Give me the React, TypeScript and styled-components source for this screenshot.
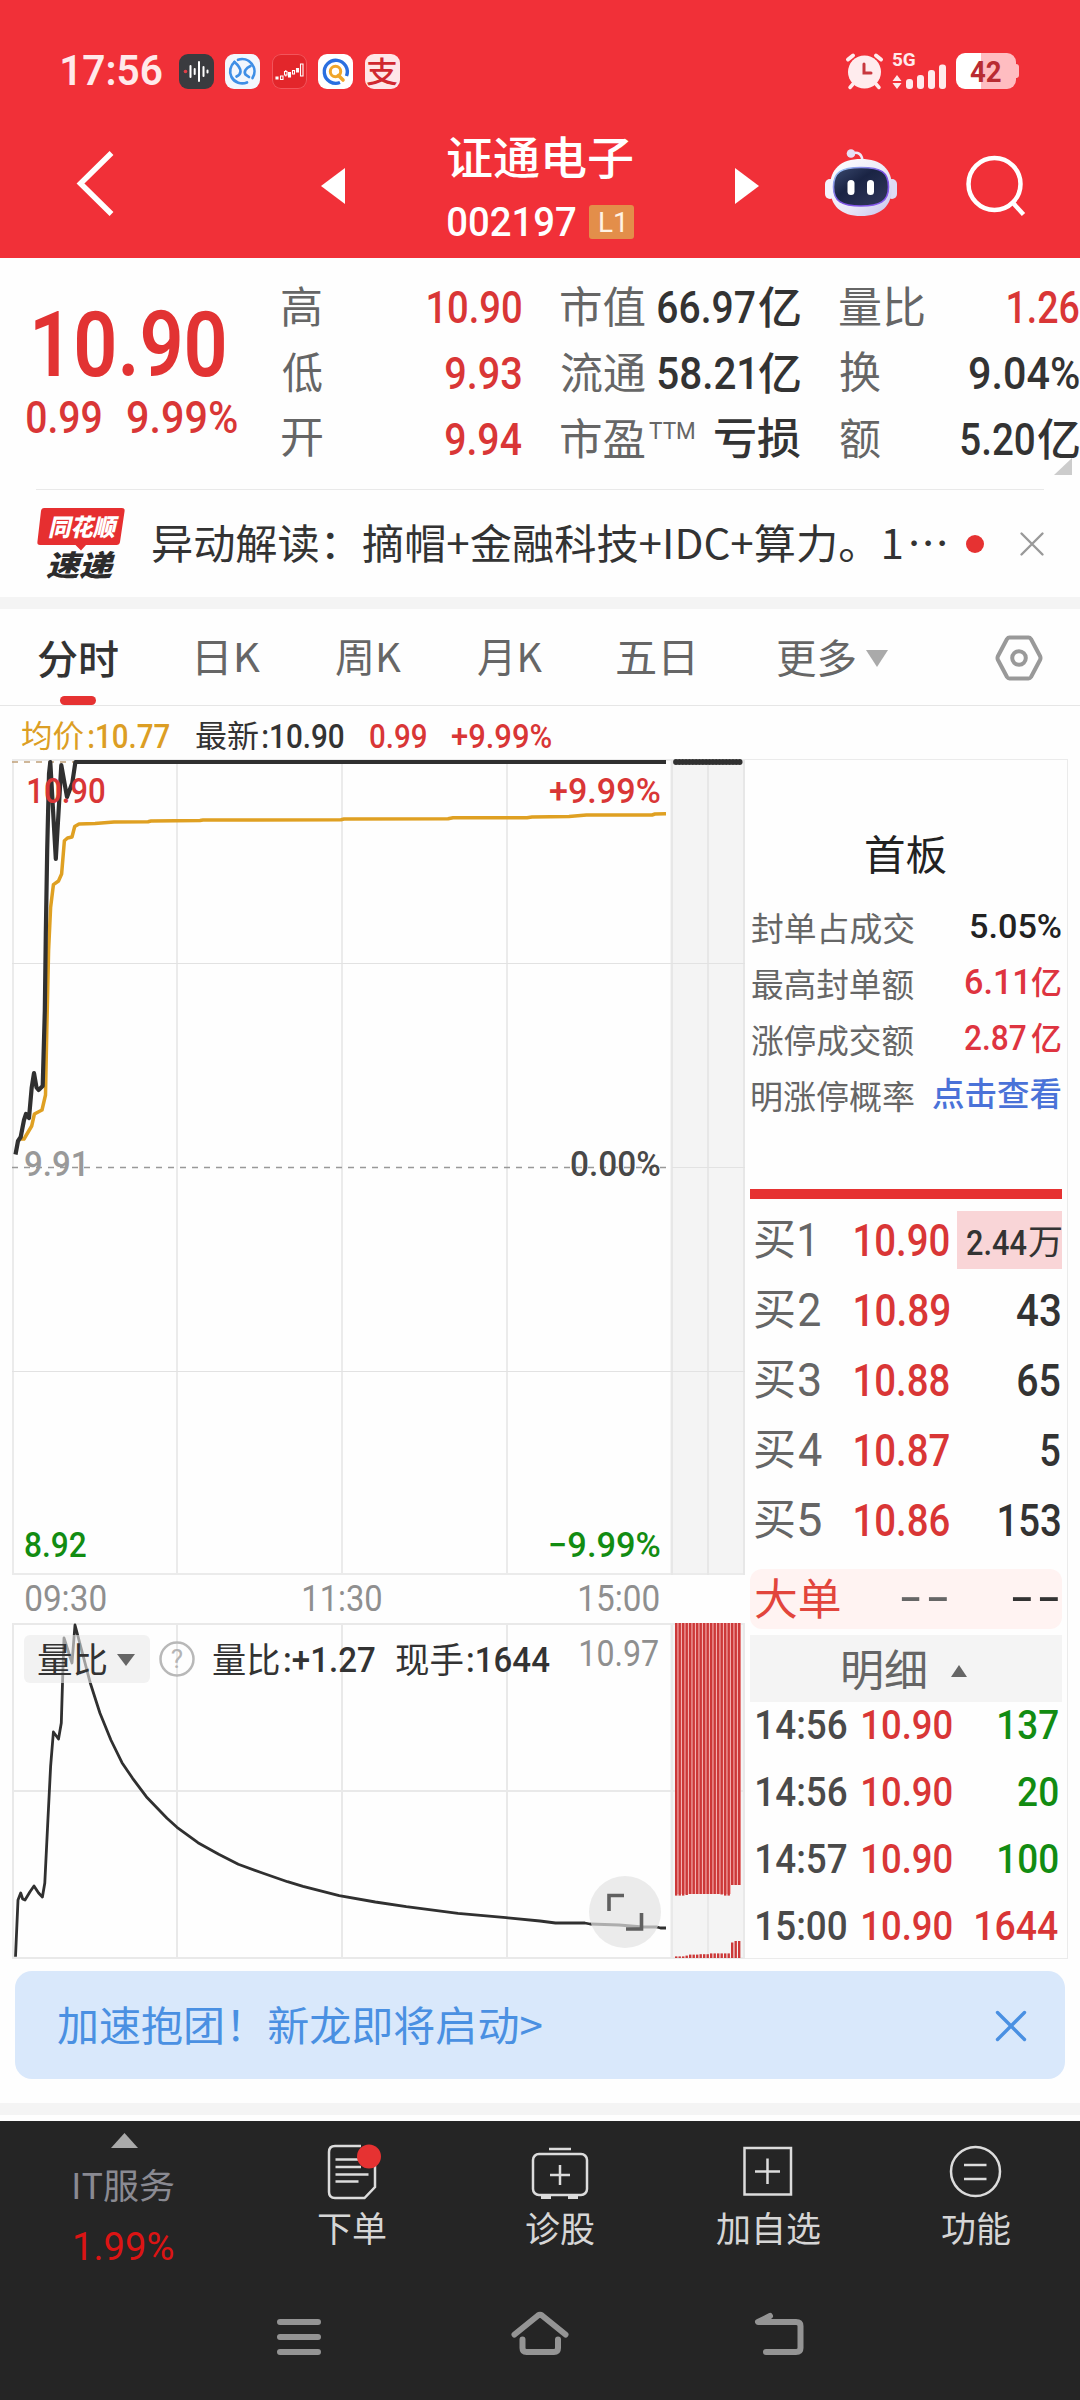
import React, { useLayoutEffect, useRef, useState } from "react";
import styled, { createGlobalStyle } from "styled-components";

const NUM = `Roboto, "Noto Sans CJK SC", sans-serif`;
const CJK = `"Noto Sans CJK SC", Roboto, sans-serif`;

const Global = createGlobalStyle`
  * { box-sizing: border-box; }
  body { margin: 0; background: #fefefe; font-family: ${NUM}; line-height: 1.2; }
  svg { display: block; flex: none; overflow: visible; }
`;

/* ---------- text fitted to an exact ink width, centred on its ink ---------- */

const FitBox = styled.span<{ $w: number; $ml?: number; $size?: number; $c?: string; $weight?: number; $cjk?: boolean }>`
  display: block;
  flex: none;
  width: ${(p) => p.$w}px;
  margin-left: ${(p) => p.$ml ?? 0}px;
  white-space: nowrap;
  ${(p) => (p.$size ? `font-size: ${p.$size}px;` : "")}
  ${(p) => (p.$c ? `color: ${p.$c};` : "")}
  font-weight: ${(p) => p.$weight ?? (p.$cjk ? 400 : 500)};
  font-family: ${(p) => (p.$cjk ? CJK : NUM)};
`;

const FitInk = styled.span`
  display: inline-block;
  transform-origin: 0 50%;
`;

interface TextProps {
  w: number;
  ml?: number;
  size?: number;
  c?: string;
  weight?: number;
  cjk?: boolean;
  children: string;
}

function Text({ w, ml, size, c, weight, cjk, children }: TextProps) {
  const ref = useRef<HTMLSpanElement>(null);
  const [transform, setTransform] = useState("none");
  useLayoutEffect(() => {
    const el = ref.current;
    const ctx = document.createElement("canvas").getContext("2d");
    if (!el || !ctx) return;
    const cs = getComputedStyle(el);
    ctx.font = `${cs.fontWeight} ${cs.fontSize} ${cs.fontFamily}`;
    const m = ctx.measureText(children);
    const s = w / (m.actualBoundingBoxLeft + m.actualBoundingBoxRight);
    const base = (m.fontBoundingBoxAscent - m.fontBoundingBoxDescent) / 2;
    const dy = (m.actualBoundingBoxAscent - m.actualBoundingBoxDescent) / 2 - base;
    setTransform(`translate(${m.actualBoundingBoxLeft * s}px, ${dy}px) scaleX(${s})`);
  }, [children, w, size, weight]);
  return (
    <FitBox $w={w} $ml={ml} $size={size} $c={c} $weight={weight} $cjk={cjk}>
      <FitInk ref={ref} style={{ transform }}>{children}</FitInk>
    </FitBox>
  );
}

const Cn = (p: TextProps) => <Text cjk {...p} />;

/* ---------- page ---------- */

const Page = styled.div`
  width: 1080px;
  height: 2400px;
  display: flex;
  flex-direction: column;
  overflow: hidden;
  background: #fefefe;
  color: #333;
`;

const Header = styled.header`
  height: 258px;
  padding-top: 35px;
  background: #f13038;
  color: #fff;
`;
const StatusBar = styled.div`
  display: flex;
  align-items: center;
  height: 72px;
  padding-left: 62px;
`;
const AppIcons = styled.div`
  display: flex;
  gap: 11.6px;
  margin-left: 17px;
`;
const AppIcon = styled.div<{ $bg: string; $line?: string }>`
  width: 35px;
  height: 35px;
  border-radius: 9px;
  display: flex;
  align-items: center;
  justify-content: center;
  background: ${(p) => p.$bg};
  box-shadow: inset 0 0 0 1px ${(p) => p.$line ?? "transparent"};
`;
const StatusRight = styled.div`
  display: flex;
  align-items: center;
  margin-left: 446px;
`;
const Signal = styled.div`
  display: flex;
  flex-direction: column;
  width: 55px;
  height: 36px;
  margin-left: 9.5px;
`;
const NetworkType = styled.div`
  display: flex;
  align-items: center;
  height: 14px;
`;
const Battery = styled.div`
  display: flex;
  align-items: center;
  width: 60px;
  height: 36px;
  margin-left: 9px;
  border-radius: 9px;
  background: linear-gradient(90deg, #fff 41%, #ffbdc1 41%);
`;
const BatteryNub = styled.div`
  width: 3px;
  height: 14px;
  border-radius: 0 3px 3px 0;
  background: #ffbdc1;
`;
const Nav = styled.div`
  display: flex;
  align-items: center;
  height: 151px;
  padding-left: 77px;
`;
const TitleBlock = styled.div`
  width: 186px;
  margin-left: 103px;
  padding-top: 7px;
`;
const TitleRow = styled.div<{ $h: number; $mt?: number }>`
  display: flex;
  align-items: center;
  height: ${(p) => p.$h}px;
  margin-top: ${(p) => p.$mt ?? 0}px;
`;
const LevelTag = styled.div`
  display: flex;
  align-items: center;
  justify-content: center;
  width: 45px;
  height: 34px;
  margin-left: 13px;
  border-radius: 3px;
  background: #e38e4a;
`;

/* ---------- quote ---------- */

const Quote = styled.section`
  position: relative;
  display: flex;
  height: 231px;
  padding-top: 16px;
`;
const PriceBlock = styled.div`
  flex: none;
  width: 282px;
  padding-top: 26px;
  color: #e23333;
`;
const Line = styled.div<{ $h: number; $pl?: number }>`
  display: flex;
  align-items: center;
  height: ${(p) => p.$h}px;
  padding-left: ${(p) => p.$pl ?? 0}px;
`;
const Group = styled.div`
  width: 239px;
  margin-right: 40px;
  flex: none;
`;
const Stat = styled.div`
  display: flex;
  align-items: center;
  justify-content: space-between;
  height: 66px;
`;
const Pair = styled.div<{ $gap: number }>`
  display: flex;
  align-items: center;
  gap: ${(p) => p.$gap}px;
`;
const Raised = styled.div`
  padding-bottom: 17px;
`;
const Corner = styled.div`
  position: absolute;
  right: 8px;
  top: 200px;
  width: 18px;
  height: 17px;
  background: #ccc;
  clip-path: polygon(100% 0, 100% 100%, 0 100%);
`;

const News = styled.section`
  display: flex;
  align-items: center;
  height: 108px;
  margin: 0 36px;
  border-top: 1px solid #e9e9e9;
`;
const Dot = styled.div`
  width: 18px;
  height: 18px;
  margin: 0 36px 0 21px;
  border-radius: 50%;
  background: #e63232;
`;
const Band = styled.div`
  height: 12px;
  flex: none;
  background: #f4f4f4;
`;

/* ---------- tabs ---------- */

const Tabs = styled.nav`
  display: flex;
  align-items: center;
  height: 97px;
  padding: 2px 0 0 38px;
  border-bottom: 1px solid #e6e6e6;
`;
const ActiveTab = styled.div`
  display: flex;
  flex-direction: column;
  justify-content: space-between;
  align-items: center;
  align-self: stretch;
  width: 80px;
  padding-top: 24px;
`;
const Underline = styled.div`
  width: 36px;
  height: 9px;
  border-radius: 5px;
  background: #e63232;
`;

/* ---------- charts ---------- */

const Main = styled.main`
  display: flex;
  height: 1256px;
`;
const ChartColumn = styled.div`
  width: 745px;
  flex: none;
`;
const Legend = styled.div`
  display: flex;
  align-items: center;
  height: 50px;
  padding: 10px 0 0 22px;
`;
const ChartArea = styled.div<{ $h: number }>`
  position: relative;
  height: ${(p) => p.$h}px;
`;
const ChartLabel = styled.div<{ $x: number; $y: number }>`
  position: absolute;
  left: ${(p) => p.$x}px;
  top: ${(p) => p.$y}px;
  height: 0;
  display: flex;
  align-items: center;
`;
const TimeAxis = styled.div`
  display: flex;
  align-items: center;
  height: 46px;
  padding-left: 26px;
`;
const IndicatorBar = styled.div`
  position: absolute;
  left: 24px;
  top: 13px;
  display: flex;
  align-items: center;
  height: 48px;
`;
const IndicatorButton = styled.div`
  display: flex;
  align-items: center;
  width: 126px;
  height: 48px;
  padding: 2px 0 0 14px;
  border-radius: 6px;
  background: rgba(233, 233, 233, 0.6);
`;
const IndicatorValues = styled.div`
  display: flex;
  align-items: center;
  padding-top: 2px;
`;
const Expand = styled.div`
  position: absolute;
  left: 589px;
  top: 254px;
  width: 72px;
  height: 72px;
  border-radius: 50%;
  background: rgba(226, 226, 226, 0.7);
`;

/* ---------- order panel ---------- */

const Panel = styled.aside`
  width: 323px;
  height: 1200px;
  margin-top: 53px;
  padding: 0 5px;
  border: 1px solid #ebebeb;
  border-left: none;
`;
const PanelTitle = styled.div`
  display: flex;
  align-items: center;
  justify-content: center;
  height: 61px;
  margin: 64px 0 16px;
`;
const LimitRow = styled.div`
  display: flex;
  align-items: center;
  justify-content: space-between;
  height: 56px;
  padding: 0 1px 0 2px;
`;
const LimitValue = styled.div`
  display: flex;
  align-items: center;
  gap: 5px;
  padding-bottom: 6px;
`;
const RedBar = styled.div`
  height: 10px;
  margin: 64px 0 6px;
  background: #e63232;
`;
const BuyRow = styled.div`
  display: grid;
  grid-template-columns: 100px 94px 1fr;
  align-items: center;
  height: 70px;
  padding-left: 5px;
`;
const Qty = styled.div<{ $hot?: boolean }>`
  display: flex;
  align-items: center;
  justify-content: flex-end;
  gap: 2px;
  height: 58px;
  margin-left: 8px;
  padding: ${(p) => (p.$hot ? "6px 1px 0 0" : "0 2px 0 0")};
  background: ${(p) => (p.$hot ? "#f9d5d7" : "none")};
`;
const BigOrder = styled.div`
  display: flex;
  align-items: center;
  height: 60px;
  margin-top: 14px;
  padding-left: 5px;
  border-radius: 12px;
  background: #fff3f2;
`;
const DetailHead = styled.div`
  display: flex;
  align-items: center;
  height: 67px;
  margin-top: 6px;
  padding: 4px 0 0 93px;
  background: #f4f4f4;
`;
const Ticks = styled.div`
  margin-top: -11px;
`;
const Tick = styled.div`
  display: grid;
  grid-template-columns: 106px 90px 1fr;
  align-items: center;
  justify-items: start;
  height: 67px;
  padding: 0 4px 0 7px;
  & > :last-child { justify-self: end; }
`;

/* ---------- bottom ---------- */

const Banner = styled.section`
  display: flex;
  align-items: center;
  justify-content: space-between;
  height: 108px;
  margin: 9px 15px 24px;
  padding: 2px 39px 0 43px;
  border-radius: 17px;
  background: #d9e8fb;
`;
const BottomBar = styled.footer`
  display: flex;
  height: 157px;
  margin-top: 6px;
  background: #252525;
`;
const Sector = styled.div`
  display: flex;
  flex-direction: column;
  align-items: center;
  width: 248px;
  padding-top: 12px;
`;
const SectorLine = styled.div<{ $h: number }>`
  display: flex;
  align-items: center;
  height: ${(p) => p.$h}px;
`;
const NavItem = styled.div`
  display: flex;
  flex-direction: column;
  align-items: center;
  width: 208px;
  padding-top: 20px;
`;
const NavLabel = styled.div`
  display: flex;
  align-items: center;
  height: 55px;
`;
const SystemBar = styled.div`
  display: flex;
  justify-content: center;
  flex: 1;
  gap: 182px;
  padding-top: 26px;
  background: #252525;
`;

/* ---------- data ---------- */

const GRAY = "#666";
const RED = "#d93636";
const GREEN = "#128c12";

const buys = [
  { n: "1", nw: 12, price: "10.90", qty: "2.44", qw: 60, unit: "万" },
  { n: "2", nw: 21, price: "10.89", qty: "43", qw: 43 },
  { n: "3", nw: 21, price: "10.88", qty: "65", qw: 42 },
  { n: "4", nw: 23, price: "10.87", qty: "5", qw: 19 },
  { n: "5", nw: 22, price: "10.86", qty: "153", qw: 61 },
];
const ticks = [
  { t: "14:56", q: "137", w: 59, c: GREEN },
  { t: "14:56", q: "20", w: 40, c: GREEN },
  { t: "14:57", q: "100", w: 59, c: GREEN },
  { t: "15:00", q: "1644", w: 82, c: RED },
];

const pricePath =
  "15.5,1154.5 18,1141 20.7,1137 24,1120 26,1114 29,1118 31.7,1087.5 34,1073 36.5,1087.5 38.6,1090 42.7,1086 44.8,1011 45.8,934 47.2,850 49,773.7 50.3,762 55.8,859 61.3,765 67,797 72.3,783 75.4,762 666,762";
const avgPath =
  "20.7,1139 24,1139 31.7,1126 34.4,1114 42,1110 45.5,1095 46.8,1030 48.6,950 50.6,907.6 53.4,884.7 58.5,881 61.6,874 64.4,840.7 67.5,838 72,837 74.7,826.5 79,824 95,823.4 114,822 148,821.7 151,821 200,820.5 203,820 341,819.8 344,819 448,818.8 453,817.8 527,817.7 532,817 569,816.5 586.5,815 652,815 655,814 666,813.8";
const ratioPath =
  "15.5,1956.7 18,1900 20.7,1893 22.7,1899 25,1900 30,1891.7 34,1886 38.6,1893 42.4,1897 44.8,1883 47.9,1820 50.6,1766.7 53.4,1732 58.5,1739 61.3,1723 62.7,1676.7 64,1638 72,1663 75,1625 90.2,1682.7 99.9,1713 110.9,1740 122,1762.7 132.6,1778.3 146.3,1796.7 167,1818.3 177,1827.3 198,1842.7 218.7,1854.3 238.3,1864.3 261.7,1872.7 287.5,1881.7 303,1886.3 339.2,1895.7 375.3,1902 406.3,1906.7 458,1913.3 506,1917.7 540,1921 555.5,1923 584.8,1923 590,1924 619,1925 643,1927 657,1927 660.5,1928 666,1928";
const auctionTop = [272.6, 272.6, 272.6, 272, 271, 271, 271, 271, 271, 271, 271, 271, 271, 271.5, 272.6, 272.6, 262, 262, 262];
const auctionBottom = [1.6, 1.6, 1.6, 2.4, 3.4, 3.4, 3.4, 3.8, 3.8, 3.8, 4.6, 4.6, 4.6, 4.6, 4.6, 4.6, 15.5, 17, 17];

/* ---------- drawings ---------- */

const Up = ({ w, h, c }: { w: number; h: number; c: string }) => (
  <svg width={w} height={h} viewBox="0 0 10 10" preserveAspectRatio="none"><path d="M0 10H10L5 0Z" fill={c} /></svg>
);
const Cross = ({ s, c, sw }: { s: number; c: string; sw: number }) => (
  <svg width={s} height={s} viewBox={`0 0 ${s} ${s}`} stroke={c} strokeWidth={sw} strokeLinecap="round">
    <path d={`M1.5 1.5L${s - 1.5} ${s - 1.5}M${s - 1.5} 1.5L1.5 ${s - 1.5}`} />
  </svg>
);

const Robot = () => (
  <svg width="72" height="68" viewBox="0 0 72 68" style={{ marginLeft: 66 }}>
    <defs>
      <linearGradient id="shell" x1="0" y1="0" x2="1" y2="1">
        <stop offset="0" stopColor="#fff" /><stop offset=".6" stopColor="#e9e7f7" /><stop offset="1" stopColor="#c5c2ec" />
      </linearGradient>
      <linearGradient id="rim" x1="0" y1="0" x2="1" y2="1">
        <stop offset="0" stopColor="#9fd8f5" /><stop offset=".5" stopColor="#7a4fe0" /><stop offset="1" stopColor="#8a5cf0" />
      </linearGradient>
      <linearGradient id="face" x1="0" y1="0" x2="1" y2="1">
        <stop offset="0" stopColor="#3b4a70" /><stop offset=".4" stopColor="#1a2444" /><stop offset="1" stopColor="#33385c" />
      </linearGradient>
    </defs>
    <path d="M27 4.500C33 2.500 37 5 37.500 12" fill="none" stroke="#f0e9fa" strokeWidth="2.600" />
    <circle cx="26" cy="4.500" r="4.300" fill="#e6e0f6" />
    <rect x="0" y="30" width="10" height="20" rx="5" fill="#f4f2fc" />
    <rect x="62" y="30" width="10" height="20" rx="5" fill="#dedaf5" />
    <path d="M36 10C56 10 67 20 67 38C67 57 56 67 36 67C16 67 5 57 5 38C5 20 16 10 36 10Z" fill="url(#shell)" />
    <path d="M36 18.500C56 18.500 63.500 23 63.500 38C63.500 52.500 55 57 36 57C17 57 8.500 52.500 8.500 38C8.500 23 16 18.500 36 18.500Z" fill="url(#face)" stroke="url(#rim)" strokeWidth="1.600" />
    <rect x="22.500" y="31" width="7" height="15" rx="3.500" fill="#fff" />
    <rect x="42" y="31" width="7" height="15" rx="3.500" fill="#fff" />
  </svg>
);

const NewsLogo = () => (
  <svg width="88" height="72" viewBox="0 0 88 72" style={{ marginLeft: 1 }}>
    <path d="M7 0H85Q88 0 87.600 3L83 34Q82.500 37 79.500 37H49L44 42.500L38.500 37H3Q0 37 .400 34L4 3Q4.500 0 7 0Z" fill="#e62f30" />
    <text x="11" y="27.500" fontSize="24" fontWeight="900" fontStyle="italic" fontFamily={CJK} fill="#fff" textLength="67" lengthAdjust="spacingAndGlyphs">同花顺</text>
    <text x="9" y="67.500" fontSize="29" fontWeight="900" fontStyle="italic" fontFamily={CJK} fill="#2c2c2c" textLength="66" lengthAdjust="spacingAndGlyphs">速递</text>
  </svg>
);

const PriceChart = () => (
  <svg width="746" height="820" viewBox="0 756 746 820" fill="none">
    <rect x="670" y="760" width="75" height="815" fill="#f4f4f4" />
    <g stroke="#ebebeb" strokeWidth="2">
      <path d="M13 760V1575M177 760V1575M342 760V1575M507 760V1575M12 760H745M12 1574H745" />
      <path d="M672 760V1575M708 760V1575M744 760V1575" stroke="#e7e7e7" />
      <path d="M12 963.500H745M12 1371.500H745M672 1167.500H745" stroke="#e2e2e2" strokeWidth="1" />
    </g>
    <path d="M12 1167.500H666" stroke="#999" strokeWidth="1.500" strokeDasharray="6 6" />
    <path d="M12 762H74" stroke="#c0a078" strokeWidth="1.500" strokeDasharray="6 6" />
    <polyline points={avgPath} stroke="#dfa022" strokeWidth="3.500" strokeLinejoin="round" />
    <polyline points={pricePath} stroke="#303030" strokeWidth="4.200" strokeLinejoin="round" />
    <g fill="#303030">
      {Array.from({ length: 20 }, (_, i) => <circle key={i} cx={676 + i * 3.35} cy="762" r="2.9" />)}
    </g>
  </svg>
);

const RatioChart = () => (
  <svg width="746" height="338" viewBox="0 1622 746 338" fill="none">
    <rect x="670" y="1623" width="75" height="335" fill="#f4f4f4" />
    <path d="M13 1623V1959M177 1623V1959M342 1623V1959M507 1623V1959M672 1623V1959M708 1623V1959M744 1623V1959M12 1624H745M12 1791H745M12 1958H745" stroke="#e9e9e9" strokeWidth="2" />
    <rect x="675" y="1623" width="56" height="271" fill="#f4b0b0" />
    <rect x="731" y="1623" width="10" height="262" fill="#f4b0b0" />
    <g fill="#cc3838">
      {auctionTop.map((h, i) => <rect key={i} x={675 + i * 3.5} y="1623" width="2.4" height={h} />)}
      {auctionBottom.map((h, i) => <rect key={i} x={675 + i * 3.5} y={1958 - h} width="2.4" height={h} />)}
    </g>
    <polyline points={ratioPath} stroke="#303030" strokeWidth="2.800" strokeLinejoin="round" />
  </svg>
);

function Top() {
  return (
    <Header>
      <StatusBar>
        <Text w={99.5} size={43} weight={600} c="#ffe9ea">17:56</Text>
        <AppIcons>
          <AppIcon $bg="#3a3b3f">
            <svg width="35" height="35" stroke="#fff" strokeWidth="2" strokeLinecap="round">
              <circle cx="6.500" cy="17.500" r="1.800" fill="#e04048" stroke="none" />
              <path d="M11.500 12V23M15.700 15V20M20 8V27M24.500 13V22M28.500 16.500V18.500" />
            </svg>
          </AppIcon>
          <AppIcon $bg="#f3f7fd">
            <svg width="35" height="35" fill="none" stroke="#3f8fe6" strokeWidth="2.700" strokeLinecap="round">
              <path d="M13 5.800A12.300 12.300 0 0 1 27.500 24M22 28.500A12.300 12.300 0 0 1 6.500 23A12.300 12.300 0 0 1 9.500 8" />
              <path d="M9.500 8C13 11 15.500 14 15.500 17.500C15.500 20 13.500 21.500 11.500 22.500" />
              <path d="M25.500 12C21 14 18.500 17.500 20.500 20.500L24 23" />
            </svg>
          </AppIcon>
          <AppIcon $bg="#e3262b" $line="#f2555c">
            <svg width="35" height="35" fill="none" stroke="#fff" strokeWidth="1.100">
              <path d="M4 23H6V25H4Z" fill="#fff" />
              <path d="M8.500 22H11V25.500H8.500ZM12.500 17.500H15V21H12.500ZM13.800 16V17.500M13.800 21V22.500M20.500 16.500H22.500V20H20.500ZM28.500 10H31V22H28.500Z" />
              <path d="M16.500 18.500H18.500V23H16.500ZM24.500 14.500H26.500V18H24.500Z" fill="#fff" />
            </svg>
          </AppIcon>
          <AppIcon $bg="#fff">
            <svg width="35" height="35" fill="none" strokeLinecap="butt">
              <path d="M22 28.500A11.500 11.500 0 1 1 28.500 22" stroke="#2a6fe0" strokeWidth="3.400" />
              <circle cx="17.500" cy="17.500" r="5.200" stroke="#f0a52a" strokeWidth="3" />
              <path d="M20.500 21.500L25 26" stroke="#f0a52a" strokeWidth="3.600" strokeLinecap="round" />
            </svg>
          </AppIcon>
          <AppIcon $bg="#ffe6e8">
            <Cn w={32} size={29} weight={500} c="#d0282f">支</Cn>
          </AppIcon>
        </AppIcons>
        <StatusRight>
          <svg width="37" height="36" viewBox="0 0 37 36" stroke="#ffecee" strokeLinecap="round">
            <circle cx="18.500" cy="19" r="16.500" fill="#ffecee" stroke="none" />
            <path d="M2 6.500L7 2.500M35 6.500L30 2.500" strokeWidth="4" />
            <path d="M7 31L4 34.500M30 31L33 34.500" strokeWidth="3.500" />
            <path d="M18 11V20H25" fill="none" stroke="#c8383f" strokeWidth="3" />
          </svg>
          <Signal>
            <NetworkType><Text w={23.5} size={18} weight={700} c="#ffeaec">5G</Text></NetworkType>
            <svg width="55" height="22" viewBox="0 14 55 22" fill="#ffeaec">
              <path d="M.5 28L5 22L9.500 28ZM.5 30L5 36L9.500 30Z" />
              <rect x="14" y="26" width="7" height="10" rx="3" />
              <rect x="25" y="22" width="7" height="14" rx="3" />
              <rect x="36" y="17" width="7" height="19" rx="3" />
              <rect x="47" y="11.500" width="7" height="24.500" rx="3" />
            </svg>
          </Signal>
          <Battery><Text w={31} ml={14} size={29} weight={700} c="#b92c32">42</Text></Battery>
          <BatteryNub />
        </StatusRight>
      </StatusBar>
      <Nav>
        <svg width="38" height="68" viewBox="0 0 38 68" fill="none" stroke="#fff" strokeWidth="5.500"><path d="M34.500 4L3.500 34.500L34.500 65" /></svg>
        <svg width="24" height="36" viewBox="0 0 24 36" style={{ marginLeft: 206, marginTop: 7 }}><path d="M24 0V36L0 18Z" fill="#fff" /></svg>
        <TitleBlock>
          <TitleRow $h={50}><Cn w={184} size={45} weight={500}>证通电子</Cn></TitleRow>
          <TitleRow $h={34} $mt={22}>
            <Text w={127.5} size={41}>002197</Text>
            <LevelTag><Text w={23} size={28} weight={400} c="#fff3e4">L1</Text></LevelTag>
          </TitleRow>
        </TitleBlock>
        <svg width="24" height="36" viewBox="0 0 24 36" style={{ marginLeft: 101, marginTop: 7 }}><path d="M0 0V36L24 18Z" fill="#fff" /></svg>
        <Robot />
        <svg width="62" height="62" viewBox="0 0 62 62" fill="none" stroke="#fff" strokeWidth="4.500" style={{ marginLeft: 69, marginTop: 6 }}>
          <circle cx="28.500" cy="29" r="26" /><path d="M47.500 48.500L57.500 59.500" />
        </svg>
      </Nav>
    </Header>
  );
}

const Yi = () => <Cn w={41} size={44} weight={500}>亿</Cn>;

function QuoteSection() {
  return (
    <Quote>
      <PriceBlock>
        <Line $h={85} $pl={35}><Text w={189} size={90} weight={600}>10.90</Text></Line>
        <Line $h={65} $pl={26.5}>
          <Text w={74} size={44} c={RED}>0.99</Text>
          <Text w={109} ml={27.5} size={44} c={RED}>9.99%</Text>
        </Line>
      </PriceBlock>
      <Group>
        <Stat><Cn w={39} size={43} c={GRAY}>高</Cn><Text w={93} size={44} c={RED}>10.90</Text></Stat>
        <Stat><Cn w={40} size={43} c={GRAY}>低</Cn><Text w={75} size={44} c={RED}>9.93</Text></Stat>
        <Stat><Cn w={40} size={43} c={GRAY}>开</Cn><Text w={75} size={44} c={RED}>9.94</Text></Stat>
      </Group>
      <Group>
        <Stat><Cn w={84} size={43} c={GRAY}>市值</Cn><Pair $gap={4}><Text w={97} size={44}>66.97</Text><Yi /></Pair></Stat>
        <Stat><Cn w={84} size={43} c={GRAY}>流通</Cn><Pair $gap={7}><Text w={94} size={44}>58.21</Text><Yi /></Pair></Stat>
        <Stat>
          <Pair $gap={3.5}><Cn w={84} size={43} c={GRAY}>市盈</Cn><Raised><Text w={45} size={24} weight={400} c={GRAY}>TTM</Text></Raised></Pair>
          <Cn w={85} size={43} weight={500}>亏损</Cn>
        </Stat>
      </Group>
      <Group>
        <Stat><Cn w={84} size={43} c={GRAY}>量比</Cn><Text w={71} size={44} c={RED}>1.26</Text></Stat>
        <Stat><Cn w={40} size={43} c={GRAY}>换</Cn><Text w={109} size={44}>9.04%</Text></Stat>
        <Stat><Cn w={40} size={43} c={GRAY}>额</Cn><Pair $gap={4}><Text w={73} size={44}>5.20</Text><Yi /></Pair></Stat>
      </Group>
      <Corner />
    </Quote>
  );
}

function TabRow() {
  return (
    <Tabs>
      <ActiveTab><Cn w={80} size={40} weight={500}>分时</Cn><Underline /></ActiveTab>
      <Cn w={62} ml={80} size={40} c={GRAY}>日K</Cn>
      <Cn w={65} ml={76} size={40} c={GRAY}>周K</Cn>
      <Cn w={64} ml={77} size={40} c={GRAY}>月K</Cn>
      <Cn w={76} ml={75} size={40} c={GRAY}>五日</Cn>
      <Cn w={78} ml={83.5} size={40} c={GRAY}>更多</Cn>
      <svg width="22" height="17" viewBox="0 0 22 17" style={{ marginLeft: 11 }}><path d="M0 0H22L11 17Z" fill="#aaa" /></svg>
      <svg width="48" height="46" viewBox="0 0 48 46" fill="none" stroke="#999" strokeWidth="4" strokeLinejoin="round" style={{ marginLeft: 107 }}>
        <path d="M14.500 2.500H33.500Q35 2.500 36 4L45 21Q46 23 45 25L36 42Q35 43.500 33.500 43.500H14.500Q13 43.500 12 42L3 25Q2 23 3 21L12 4Q13 2.500 14.500 2.500Z" />
        <circle cx="24" cy="23" r="6.800" />
      </svg>
    </Tabs>
  );
}

function Charts() {
  return (
    <ChartColumn>
      <Legend>
        <Cn w={62} size={31} c="#dc9e24">均价</Cn>
        <Text w={80.5} ml={4.5} size={33} c="#dc9e24">:10.77</Text>
        <Cn w={62} ml={27} size={31}>最新</Cn>
        <Text w={81} ml={4.5} size={33}>:10.90</Text>
        <Text w={56} ml={26} size={33} c={RED}>0.99</Text>
        <Text w={99} ml={26} size={33} c={RED}>+9.99%</Text>
      </Legend>
      <ChartArea $h={820}>
        <PriceChart />
        <ChartLabel $x={27.5} $y={35}><Text w={77} size={35} c={RED}>10.90</Text></ChartLabel>
        <ChartLabel $x={550} $y={35}><Text w={110} size={35} c={RED}>+9.99%</Text></ChartLabel>
        <ChartLabel $x={25} $y={408}><Text w={59} size={35} c="#999">9.91</Text></ChartLabel>
        <ChartLabel $x={571} $y={408}><Text w={89} size={35} c="#484848">0.00%</Text></ChartLabel>
        <ChartLabel $x={25} $y={789}><Text w={61} size={35} c={GREEN}>8.92</Text></ChartLabel>
        <ChartLabel $x={550} $y={789}><Text w={110} size={35} c={GREEN}>−9.99%</Text></ChartLabel>
      </ChartArea>
      <TimeAxis>
        <Text w={80} size={36} weight={400} c="#8f8f8f">09:30</Text>
        <Text w={77.5} ml={198} size={36} weight={400} c="#8f8f8f">11:30</Text>
        <Text w={79} ml={198.5} size={36} weight={400} c="#8f8f8f">15:00</Text>
      </TimeAxis>
      <ChartArea $h={338}>
        <RatioChart />
        <IndicatorBar>
          <IndicatorButton>
            <Cn w={68} size={35}>量比</Cn>
            <svg width="18" height="12" viewBox="0 0 18 12" style={{ marginLeft: 11 }}><path d="M0 0H18L9 12Z" fill="#666" /></svg>
          </IndicatorButton>
          <svg width="36" height="36" viewBox="0 0 36 36" style={{ marginLeft: 8.5 }}>
            <circle cx="18" cy="18" r="16.500" fill="none" stroke="#b8b8b8" strokeWidth="2.500" />
            <text x="18" y="27" fontSize="26" fontFamily={NUM} fill="#b4b4b4" textAnchor="middle">?</text>
          </svg>
          <IndicatorValues>
            <Cn w={65.5} ml={18} size={35}>量比</Cn>
            <Text w={90} ml={6.5} size={35}>:+1.27</Text>
            <Cn w={67} ml={21.5} size={35}>现手</Cn>
            <Text w={82} ml={5} size={35}>:1644</Text>
          </IndicatorValues>
        </IndicatorBar>
        <ChartLabel $x={581} $y={31.5}><Text w={77} size={36} weight={400} c="#8f8f8f">10.97</Text></ChartLabel>
        <Expand>
          <svg width="72" height="72" fill="none" stroke="#606060" strokeWidth="3.600"><path d="M20 35V19.500H35M52.500 37V53H37" /></svg>
        </Expand>
      </ChartArea>
    </ChartColumn>
  );
}

function OrderPanel() {
  return (
    <Panel>
      <PanelTitle><Cn w={80} size={41} c="#222">首板</Cn></PanelTitle>
      <LimitRow><Cn w={162} size={33} c={GRAY}>封单占成交</Cn><LimitValue><Text w={90} size={34} c="#222">5.05%</Text></LimitValue></LimitRow>
      <LimitRow><Cn w={162} size={33} c={GRAY}>最高封单额</Cn><LimitValue><Text w={61} size={35} c="#de3440">6.11</Text><Cn w={30} size={32} weight={500} c="#de3440">亿</Cn></LimitValue></LimitRow>
      <LimitRow><Cn w={162} size={33} c={GRAY}>涨停成交额</Cn><LimitValue><Text w={61} size={35} c="#de3440">2.87</Text><Cn w={30} size={32} weight={500} c="#de3440">亿</Cn></LimitValue></LimitRow>
      <LimitRow><Cn w={162} size={33} c={GRAY}>明涨停概率</Cn><LimitValue><Cn w={128} size={33} weight={500} c="#4a72d8">点击查看</Cn></LimitValue></LimitRow>
      <RedBar />
      {buys.map((b) => (
        <BuyRow key={b.n}>
          <Pair $gap={5}><Cn w={39} size={43} c={GRAY}>买</Cn><Text w={b.nw} size={47} weight={400} c={GRAY}>{b.n}</Text></Pair>
          <Text w={94} size={45} c={RED}>{b.price}</Text>
          <Qty $hot={!!b.unit}>
            <Text w={b.qw} size={b.unit ? 35 : 44}>{b.qty}</Text>
            {b.unit && <Cn w={32} size={34}>{b.unit}</Cn>}
          </Qty>
        </BuyRow>
      ))}
      <BigOrder>
        <Cn w={84.5} size={43} c="#e2453c">大单</Cn>
        <Text w={18.5} ml={61.5} size={40} c={GRAY}>-</Text><Text w={19} ml={8.5} size={40} c={GRAY}>-</Text>
        <Text w={19} ml={65} size={40}>-</Text><Text w={19} ml={8} size={40}>-</Text>
      </BigOrder>
      <DetailHead><Cn w={82} size={43} c={GRAY}>明细</Cn><svg width="16" height="12" viewBox="0 0 16 12" style={{ marginLeft: 26 }}><path d="M0 12H16L8 0Z" fill="#666" /></svg></DetailHead>
      <Ticks>
        {ticks.map((t, i) => (
          <Tick key={i}>
            <Text w={89.5} size={41} c="#4a4a4a">{t.t}</Text>
            <Text w={89} size={41} c={RED}>10.90</Text>
            <Text w={t.w} size={41} c={t.c}>{t.q}</Text>
          </Tick>
        ))}
      </Ticks>
    </Panel>
  );
}

const line = { fill: "none", stroke: "#dcdcdc", strokeWidth: 2.5 } as const;

function Bottom() {
  return (
    <>
      <BottomBar>
        <Sector>
          <Up w={27} h={15} c="#aaa" />
          <SectorLine $h={75}><Cn w={100} size={35} c="#8a8a92">IT服务</Cn></SectorLine>
          <SectorLine $h={46}><Text w={98} size={39} weight={400} c="#dc1414">1.99%</Text></SectorLine>
        </Sector>
        <NavItem>
          <svg width="58" height="60" viewBox="0 0 58 60" {...line}>
            <path d="M38 5H12Q6 5 6 11V51Q6 57 12 57H41.500L52 46V24" />
            <path d="M12.500 18.500H36M12.500 26H38M12.500 33.500H45.500M12.500 40.500H35.500" />
            <circle cx="46" cy="15.500" r="12" fill="#e63232" stroke="none" />
          </svg>
          <NavLabel><Cn w={68} size={35} c="#d6d6d6">下单</Cn></NavLabel>
        </NavItem>
        <NavItem>
          <svg width="58" height="60" viewBox="0 0 58 60" {...line}>
            <rect x="2" y="13" width="54" height="41" rx="6" />
            <path d="M18 8H40M29 24V44M19 34H39" /><path d="M10 56H20M37 56H47" strokeWidth="4" />
          </svg>
          <NavLabel><Cn w={68} size={35} c="#d6d6d6">诊股</Cn></NavLabel>
        </NavItem>
        <NavItem>
          <svg width="58" height="60" viewBox="0 0 58 60" {...line}>
            <rect x="5.500" y="7" width="46.500" height="46.500" /><path d="M28.500 17.500V43M16 30.500H41" />
          </svg>
          <NavLabel><Cn w={104} size={35} c="#d6d6d6">加自选</Cn></NavLabel>
        </NavItem>
        <NavItem>
          <svg width="58" height="60" viewBox="0 0 58 60" {...line}>
            <circle cx="28.500" cy="30.500" r="24.500" /><path d="M17 24H39.500M17 38H39.500" />
          </svg>
          <NavLabel><Cn w={68} size={35} c="#d6d6d6">功能</Cn></NavLabel>
        </NavItem>
      </BottomBar>
      <SystemBar>
        <svg width="56" height="60" viewBox="0 0 56 60" fill="none" stroke="#949494" strokeWidth="6" strokeLinecap="round"><path d="M8 18H46M8 33H46M8 48H46" /></svg>
        <svg width="60" height="60" viewBox="0 0 60 60" fill="none" stroke="#949494" strokeWidth="6" strokeLinecap="round" strokeLinejoin="round">
          <path d="M4.500 30.500L28 11.500Q30 10 32 11.500L55.500 30.500M12.500 35.500V44Q12.500 48 16.500 48H44Q48 48 48 44V35.500" />
        </svg>
        <svg width="56" height="60" viewBox="0 0 56 60" fill="none" stroke="#949494" strokeWidth="6" strokeLinecap="round" strokeLinejoin="round">
          <path d="M18 12L6 18H44Q48.500 18 48.500 22V44Q48.500 48 44 48H14" />
        </svg>
      </SystemBar>
    </>
  );
}

export default function App() {
  return (
    <Page>
      <Global />
      <Top />
      <QuoteSection />
      <News>
        <NewsLogo />
        <Cn w={749} ml={27.5} size={41}>异动解读：摘帽+金融科技+IDC+算力。1</Cn>
        <Cn w={34} ml={9.5} size={41}>…</Cn>
        <Dot />
        <Cross s={24} c="#999" sw={2.4} />
      </News>
      <Band />
      <TabRow />
      <Main>
        <Charts />
        <OrderPanel />
      </Main>
      <Banner>
        <Cn w={484} size={41} c="#4a90e2">{"加速抱团！新龙即将启动>"}</Cn>
        <Cross s={30} c="#4a90e2" sw={3.4} />
      </Banner>
      <Band />
      <Bottom />
    </Page>
  );
}
